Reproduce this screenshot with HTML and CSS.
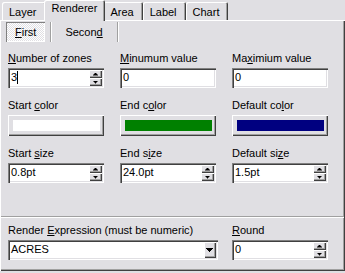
FILE: index.html
```html
<!DOCTYPE html>
<html lang="en">
<head>
  <meta charset="UTF-8" />
  <title>Renderer</title>
  <link rel="stylesheet" href="styles.css">
</head>
<body>
  <div class="tabs">
    <div class="tab">Layer</div>
    <div class="tab active">Renderer</div>
    <div class="tab">Area</div>
    <div class="tab">Label</div>
    <div class="tab">Chart</div>
  </div>

  <div class="panel">
    <div class="subtabs">
      <div class="subtab pressed"><u>F</u>irst</div>
      <span class="vsep"></span>
      <div class="subtab">Secon<u>d</u></div>
      <span class="vsep"></span>
    </div>

    <div class="grid">
      <div class="field">
        <label><u>N</u>umber of zones</label>
        <div class="edit">
          <span class="text">3<span class="caret"></span></span>
          <div class="spin"><b class="up"></b><b class="down"></b></div>
        </div>
      </div>
      <div class="field">
        <label><u>M</u>inumum value</label>
        <div class="edit"><span class="text">0</span></div>
      </div>
      <div class="field">
        <label>Ma<u>x</u>imium value</label>
        <div class="edit"><span class="text">0</span></div>
      </div>

      <div class="field">
        <label>Start <u>c</u>olor</label>
        <div class="color-btn"><div class="swatch" style="background:#ffffff"></div></div>
      </div>
      <div class="field">
        <label>End c<u>o</u>lor</label>
        <div class="color-btn"><div class="swatch" style="background:#008000"></div></div>
      </div>
      <div class="field">
        <label>Default co<u>l</u>or</label>
        <div class="color-btn"><div class="swatch" style="background:#000080"></div></div>
      </div>

      <div class="field">
        <label>Start <u>s</u>ize</label>
        <div class="edit">
          <span class="text">0.8pt</span>
          <div class="spin"><b class="up"></b><b class="down"></b></div>
        </div>
      </div>
      <div class="field">
        <label>End s<u>i</u>ze</label>
        <div class="edit">
          <span class="text">24.0pt</span>
          <div class="spin"><b class="up"></b><b class="down"></b></div>
        </div>
      </div>
      <div class="field">
        <label>Default si<u>z</u>e</label>
        <div class="edit">
          <span class="text">1.5pt</span>
          <div class="spin"><b class="up"></b><b class="down"></b></div>
        </div>
      </div>
    </div>

    <div class="rule"></div>

    <div class="grid bottom">
      <div class="field wide">
        <label>Render <u>E</u>xpression (must be numeric)</label>
        <div class="edit">
          <span class="text">ACRES</span>
          <b class="drop"></b>
        </div>
      </div>
      <div class="field">
        <label><u>R</u>ound</label>
        <div class="edit">
          <span class="text">0</span>
          <div class="spin"><b class="up"></b><b class="down"></b></div>
        </div>
      </div>
    </div>
  </div>
</body>
</html>
```

FILE: styles.css
```css
* {
  box-sizing: border-box;
}
body {
  margin: 0;
  width: 345px;
  height: 273px;
  overflow: hidden;
  background-color: #e0dfe3;
  color: #000;
  font-family: "Liberation Sans", Arial, sans-serif;
  font-size: 11px;
}

/* top tab strip */
.tabs {
  display: flex;
  align-items: flex-end;
  height: 20px;
  padding-left: 2px;
  position: relative;
  z-index: 1;
}
.tab {
  height: 18px;
  padding: 2px 9px 0 7px;
  line-height: 16px;
  border-radius: 2px 2px 0 0;
  box-shadow: inset 1px 1px #fff, inset -1px 0 #404040, inset -2px 0 #a0a0a0;
}
.tab.active {
  height: 21px;
  margin: 0 -2px -1px;
  padding: 0 8px;
  background-color: #e0dfe3;
  position: relative;
}

.panel {
  height: 251px;
  padding: 2px 0 0 1px;
  box-shadow: inset 1px 1px #fff, inset -1px -1px #404040, inset -2px -2px #a0a0a0;
}

/* First / Second */
.subtabs {
  display: flex;
  height: 20px;
  padding-left: 5px;
}
.subtab {
  padding: 0 9px;
  line-height: 20px;
}
.subtab.pressed {
  padding-top: 1px;
  line-height: 19px;
  background: repeating-conic-gradient(#fff 0 25%, #e0dfe3 0 50%) 0 0 / 2px 2px;
  box-shadow: inset 1px 1px #808080, inset -1px -1px #fff;
}
.vsep {
  width: 2px;
  margin: 0 4px 0 5px;
  box-shadow: inset 1px 0 #a0a0a0, inset -1px 0 #fff;
}

/* fields */
.grid {
  display: grid;
  grid-template-columns: repeat(3, 96px);
  column-gap: 16px;
  row-gap: 11px;
  margin-top: 10px;
  padding: 0 7px;
}
.grid.bottom {
  margin-top: 6px;
}
.wide {
  grid-column: span 2;
}
.wide .edit {
  margin-right: -2px;
}
label {
  display: block;
  line-height: 13px;
  margin-bottom: 3px;
  white-space: nowrap;
}
u {
  text-underline-offset: 1px;
}
.edit {
  display: flex;
  height: 20px;
  padding: 2px;
  background-color: #fff;
  box-shadow: inset 1px 1px #808080, inset 2px 2px #404040, inset -1px -1px #fff, inset -2px -2px #e0dfe3;
}
.text {
  flex: 1;
  padding-left: 1px;
  line-height: 14px;
  white-space: nowrap;
}
.caret {
  display: inline-block;
  width: 1px;
  height: 13px;
  background-color: #000;
  vertical-align: -3px;
}

.spin {
  display: flex;
  flex-direction: column;
  width: 13px;
}
.spin b,
.drop,
.color-btn {
  background-color: #e0dfe3;
  box-shadow: inset 1px 1px #fff, inset -1px -1px #404040, inset -2px -2px #a0a0a0;
}
.spin b {
  flex: 1;
  display: flex;
  align-items: center;
  justify-content: center;
}
/* stepped triangles so the edges stay crisp */
.spin b::after {
  content: "";
  width: 5px;
  height: 3px;
  background-color: #000;
}
.spin .up::after {
  clip-path: polygon(2px 0, 3px 0, 3px 1px, 4px 1px, 4px 2px, 5px 2px, 5px 3px, 0 3px, 0 2px, 1px 2px, 1px 1px, 2px 1px);
}
.spin .down::after {
  clip-path: polygon(0 0, 5px 0, 5px 1px, 4px 1px, 4px 2px, 3px 2px, 3px 3px, 2px 3px, 2px 2px, 1px 2px, 1px 1px, 0 1px);
}
.drop {
  width: 12px;
  display: flex;
  align-items: center;
  justify-content: center;
}
.drop::after {
  content: "";
  width: 7px;
  height: 4px;
  margin-left: -1px;
  background-color: #000;
  clip-path: polygon(0 0, 7px 0, 7px 1px, 6px 1px, 6px 2px, 5px 2px, 5px 3px, 4px 3px, 4px 4px, 3px 4px, 3px 3px, 2px 3px, 2px 2px, 1px 2px, 1px 1px, 0 1px);
}

.color-btn {
  height: 21px;
  padding: 5px 4px 5px 5px;
}
.swatch {
  height: 100%;
}

.rule {
  height: 2px;
  margin: 33px 1px 0 0;
  box-shadow: inset 0 1px #a0a0a0, inset 0 -1px #fff;
}
```
